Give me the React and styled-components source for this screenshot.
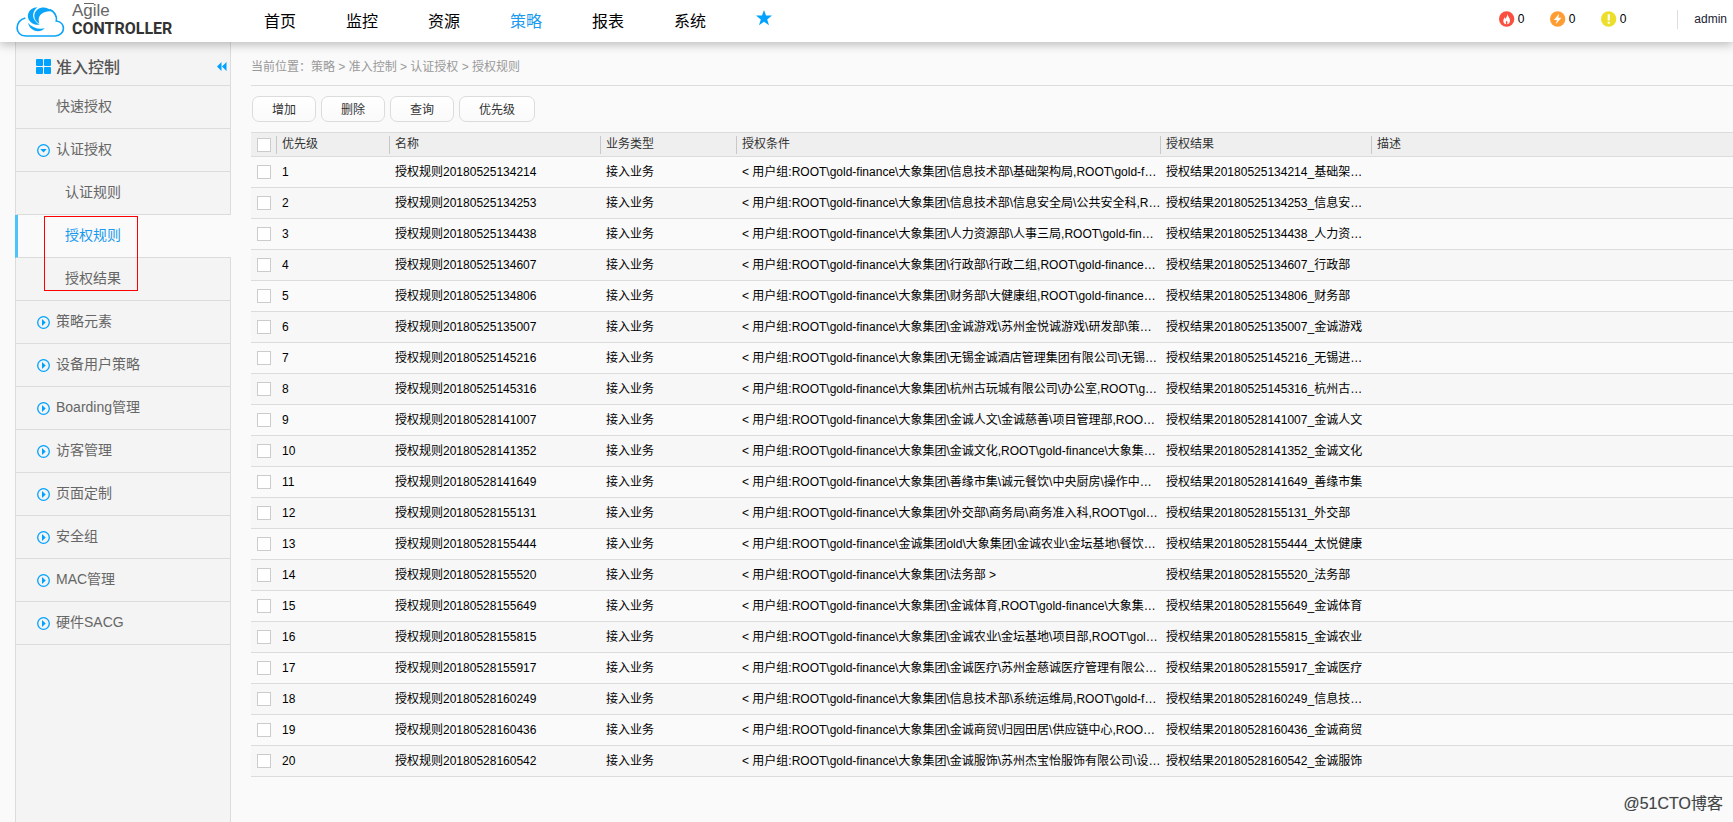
import React, { useState } from 'react';
import styled, { createGlobalStyle, css } from 'styled-components';

const GlobalStyle = createGlobalStyle`
  * {
    box-sizing: border-box;
  }
  body {
    margin: 0;
    background: #fafafa;
    color: #000;
    font-family: 'Liberation Sans', 'Noto Sans CJK SC', sans-serif;
    font-size: 12px;
  }
  a {
    color: inherit;
    text-decoration: none;
  }
  ul {
    list-style: none;
    margin: 0;
    padding: 0;
  }
  button,
  input {
    font-family: inherit;
    margin: 0;
  }
`;

const Page = styled.div`
  display: flex;
  flex-direction: column;
  min-height: 100vh;
  position: relative;
`;

const Header = styled.header`
  display: flex;
  align-items: center;
  height: 42px;
  padding: 0 6px 0 16px;
  background: #fff;
  box-shadow: 0 3px 9px rgba(0, 0, 0, 0.24);
  position: relative;
  z-index: 1;
`;

const Logo = styled.a`
  display: flex;
  width: 248px;
  gap: 7px;
  padding-bottom: 2px;
  & svg {
    margin-top: 4px;
  }
`;

const LogoText = styled.div`
  display: flex;
  flex-direction: column;
`;

const Agile = styled.span`
  align-self: flex-start;
  font-size: 17px;
  line-height: 18px;
  color: #666;
  position: relative;
  &::after {
    content: '';
    position: absolute;
    top: 1px;
    left: 12px;
    width: 10px;
    height: 1px;
    background: #666;
  }
`;

const Controller = styled.span`
  font-family: Roboto, 'Liberation Sans', sans-serif;
  font-size: 16px;
  line-height: 18px;
  font-weight: 700;
  color: #333;
`;

const Nav = styled.nav`
  display: flex;
  align-items: center;
  gap: 50px;
  flex: 1;
  padding-bottom: 2px;
  font-size: 16px;
`;

const NavLink = styled.a`
  color: ${(props) => (props.$active ? '#1b9aee' : '#000')};
`;

const Alarms = styled.div`
  display: flex;
  gap: 26px;
  padding: 0 51px 4px 0;
`;

const Alarm = styled.a`
  display: flex;
  align-items: center;
  gap: 3px;
  width: 25px;
`;

const User = styled.a`
  margin-bottom: 4px;
  padding: 2px 0 3px 16px;
  border-left: 1px solid #ddd;
  line-height: 14px;
  color: #223;
`;

const Body = styled.div`
  display: flex;
  flex: 1;
`;

const Sidebar = styled.aside`
  flex: none;
  width: 216px;
  margin-left: 15px;
  background: #f4f4f4;
  box-shadow: inset 1px 0 #dcdcdc, inset -1px 0 #dcdcdc;
`;

const SideTitle = styled.div`
  display: flex;
  align-items: center;
  gap: 5px;
  height: 44px;
  padding: 6px 4px 0 21px;
  border-bottom: 1px solid #dcdcdc;
  & h2 {
    flex: 1;
    margin: 0;
    padding-bottom: 2px;
    font-size: 16px;
    font-weight: 500;
    color: #555;
  }
`;

const Collapse = styled.button`
  display: flex;
  padding: 0;
  border: none;
  background: none;
  cursor: pointer;
`;

const MenuLink = styled.a`
  display: flex;
  align-items: center;
  gap: 6px;
  height: 43px;
  padding: 0 0 4px ${(props) => (props.$sub ? '50px' : '22px')};
  border-bottom: 1px solid #dcdcdc;
  font-size: 14px;
  color: #666;
  & svg {
    margin-top: 4px;
  }
  ${(props) =>
    props.$active &&
    css`
      padding-left: 47px;
      border-left: 3px solid #4cc4fa;
      background: #fafafa;
      color: #1b9aee;
    `}
`;

const IconSlot = styled.span`
  display: flex;
  width: 13px;
`;

const SubMenu = styled.ul`
  position: relative;
`;

const Marker = styled.div`
  position: absolute;
  top: 44px;
  left: 29px;
  width: 94px;
  height: 75px;
  border: 1px solid #f00;
  pointer-events: none;
`;

const Main = styled.main`
  flex: 1;
  min-width: 0;
  padding: 0 0 45px 20px;
`;

const Breadcrumb = styled.div`
  height: 44px;
  padding-top: 8px;
  border-bottom: 1px solid #dcdcdc;
  line-height: 34px;
  color: #999;
`;

const Toolbar = styled.div`
  display: flex;
  gap: 5px;
  padding: 10px 1px;
`;

const ToolButton = styled.button`
  height: 26px;
  padding: 0 19px 2px;
  border: 1px solid #dcdcdc;
  border-radius: 7px;
  background: linear-gradient(#fff, #fafafa);
  font-size: 12px;
  color: #333;
  cursor: pointer;
`;

const Table = styled.table`
  width: 100%;
  table-layout: fixed;
  border-collapse: separate;
  border-spacing: 0;
  border-top: 1px solid #dcdcdc;
  & th,
  & td {
    padding: 0 0 0 6px;
    border-bottom: 1px solid #dcdcdc;
    text-align: left;
    white-space: nowrap;
    overflow: hidden;
    line-height: 16px;
  }
  & th {
    height: 24px;
    background: #efefef;
    font-weight: 400;
    color: #333;
  }
  & td {
    height: 31px;
  }
  & tbody tr:nth-child(even) {
    background: #f7f7f7;
  }
`;

const HeadLabel = styled.div`
  height: 18px;
  margin-left: -6px;
  padding-left: 5px;
  border-left: 1px solid #c8c8c8;
`;

const CheckBox = styled.input`
  display: block;
  appearance: none;
  width: 14px;
  height: 14px;
  border: 1px solid #ccc;
  background: #fff;
  &:checked {
    background: #00a2ff;
  }
`;

const Watermark = styled.div`
  position: absolute;
  right: 10px;
  bottom: 6px;
  font-size: 16px;
  line-height: 24px;
  color: #444;
  text-shadow: 1px 1px #fff, 0 0 1px #999;
`;

const CloudLogo = () => (
  <svg width="49" height="32" viewBox="48 12 147 96" aria-hidden="true">
    <g fill="none" stroke="#0aa5f8" strokeWidth="5">
      <path d="M76 48C43 55 43 102 77 102H165C198 99 198 61 169 57C172 42 162 27 149 23" />
    </g>
    <g fill="#0aa5f8">
      <path d="M156 28C138 9 107 15 103 39C102 51 108 60 118 65C110 43 126 25 156 28Z" />
      <path d="M112 16C84 18 76 45 91 59C99 67 110 69 119 68C94 54 94 31 112 16Z" />
      <path d="M84 63C90 87 119 96 134 79C117 83 97 78 84 63Z" />
    </g>
  </svg>
);

const StarIcon = () => (
  <svg width="16" height="16" viewBox="0 0 16 16" aria-hidden="true">
    <path
      fill="#00a2ff"
      d="M8 0L10 5.600H16L11.200 9.400L13 15.200L8 11.800L3 15.200L4.800 9.400L0 5.600H6Z"
    />
  </svg>
);

const alarmShapes = {
  critical: (
    <path
      fill="#fff"
      d="M8.500 2.500C9 5 11.500 6.500 11.500 9.500C11.500 12 10 13.500 8.300 13.500C9.500 11.500 8.500 10.500 8 9.500C7.800 10.800 6.500 11.300 7.500 13.500C5.500 13.200 4.300 11.500 4.500 9.500C4.700 8 5.500 7.300 5.700 6.200C6.500 7 6.500 7.500 6.600 8C8 6.500 8.700 4.500 8.500 2.500Z"
    />
  ),
  major: <path fill="#fff" d="M9.500 2.500L4 9H7.300L6 13.500L12 6.700H8.700Z" />,
  warning: <path fill="#fff" d="M7 3H9.200V9.500H7ZM7 11H9.200V13H7Z" />,
};

const AlarmIcon = ({ type, color }) => (
  <svg width="16" height="16" viewBox="0 0 16 16" aria-hidden="true">
    <circle cx="8" cy="8" r="8" fill={color} />
    {alarmShapes[type]}
  </svg>
);

const GridIcon = () => (
  <svg width="15" height="15" viewBox="0 0 15 15" fill="#00a2ff" aria-hidden="true">
    <rect width="7" height="7" rx="1" />
    <rect x="8" width="7" height="7" rx="1" />
    <rect y="8" width="7" height="7" rx="1" />
    <rect x="8" y="8" width="7" height="7" rx="1" />
  </svg>
);

const CollapseIcon = () => (
  <svg width="10" height="9" viewBox="0 0 10 9" fill="#00a2ff" aria-hidden="true">
    <path d="M4.500 0V9L0 4.500ZM9.500 0V9L5 4.500Z" />
  </svg>
);

const ArrowIcon = ({ open }) => (
  <svg width="13" height="13" viewBox="0 0 13 13" aria-hidden="true">
    <circle cx="6.500" cy="6.500" r="5.800" fill="none" stroke="#00a2ff" strokeWidth="1.300" />
    <path fill="#00a2ff" d={open ? 'M3.300 5H9.700L6.500 8.500Z' : 'M5 3V10L8.700 6.500Z'} />
  </svg>
);

const navItems = ['首页', '监控', '资源', '策略', '报表', '系统'];

const alarms = [
  { type: 'critical', color: '#fb4f3f', count: 0 },
  { type: 'major', color: '#ff9c32', count: 0 },
  { type: 'warning', color: '#ecdf2b', count: 0 },
];

const menu = [
  { name: '快速授权', leaf: true },
  { name: '认证授权', children: ['认证规则', '授权规则', '授权结果'] },
  { name: '策略元素' },
  { name: '设备用户策略' },
  { name: 'Boarding管理' },
  { name: '访客管理' },
  { name: '页面定制' },
  { name: '安全组' },
  { name: 'MAC管理' },
  { name: '硬件SACG' },
];

const buttons = ['增加', '删除', '查询', '优先级'];

const columns = [
  { name: '优先级', width: 113 },
  { name: '名称', width: 211 },
  { name: '业务类型', width: 136 },
  { name: '授权条件', width: 424 },
  { name: '授权结果', width: 211 },
  { name: '描述' },
];

// [id, user group under ROOT\gold-finance, result]
const rules = [
  ['20180525134214', '大象集团\\信息技术部\\基础架构局,ROOT\\gold-f…', '基础架…'],
  ['20180525134253', '大象集团\\信息技术部\\信息安全局\\公共安全科,R…', '信息安…'],
  ['20180525134438', '大象集团\\人力资源部\\人事三局,ROOT\\gold-fin…', '人力资…'],
  ['20180525134607', '大象集团\\行政部\\行政二组,ROOT\\gold-finance…', '行政部'],
  ['20180525134806', '大象集团\\财务部\\大健康组,ROOT\\gold-finance…', '财务部'],
  ['20180525135007', '大象集团\\金诚游戏\\苏州金悦诚游戏\\研发部\\策…', '金诚游戏'],
  ['20180525145216', '大象集团\\无锡金诚酒店管理集团有限公司\\无锡…', '无锡进…'],
  ['20180525145316', '大象集团\\杭州古玩城有限公司\\办公室,ROOT\\g…', '杭州古…'],
  ['20180528141007', '大象集团\\金诚人文\\金诚慈善\\项目管理部,ROO…', '金诚人文'],
  ['20180528141352', '大象集团\\金诚文化,ROOT\\gold-finance\\大象集…', '金诚文化'],
  ['20180528141649', '大象集团\\善缘市集\\诚元餐饮\\中央厨房\\操作中…', '善缘市集'],
  ['20180528155131', '大象集团\\外交部\\商务局\\商务准入科,ROOT\\gol…', '外交部'],
  ['20180528155444', '金诚集团old\\大象集团\\金诚农业\\金坛基地\\餐饮…', '太悦健康'],
  ['20180528155520', '大象集团\\法务部 >', '法务部'],
  ['20180528155649', '大象集团\\金诚体育,ROOT\\gold-finance\\大象集…', '金诚体育'],
  ['20180528155815', '大象集团\\金诚农业\\金坛基地\\项目部,ROOT\\gol…', '金诚农业'],
  ['20180528155917', '大象集团\\金诚医疗\\苏州金慈诚医疗管理有限公…', '金诚医疗'],
  ['20180528160249', '大象集团\\信息技术部\\系统运维局,ROOT\\gold-f…', '信息技…'],
  ['20180528160436', '大象集团\\金诚商贸\\归园田居\\供应链中心,ROO…', '金诚商贸'],
  ['20180528160542', '大象集团\\金诚服饰\\苏州杰宝怡服饰有限公司\\设…', '金诚服饰'],
];

const App = () => {
  const [current, setCurrent] = useState('授权规则');
  const [selected, setSelected] = useState([]);

  const toggleHandler = (id) => {
    setSelected((prev) =>
      prev.includes(id) ? prev.filter((item) => item !== id) : [...prev, id]
    );
  };

  const toggleAllHandler = (e) => {
    setSelected(e.target.checked ? rules.map(([id]) => id) : []);
  };

  return (
    <Page>
      <GlobalStyle />
      <Header>
        <Logo href="#home">
          <CloudLogo />
          <LogoText>
            <Agile>Agile</Agile>
            <Controller>CONTROLLER</Controller>
          </LogoText>
        </Logo>
        <Nav>
          {navItems.map((name) => (
            <NavLink key={name} href={`#${name}`} $active={name === '策略'}>
              {name}
            </NavLink>
          ))}
          <a href="#favorites" aria-label="收藏">
            <StarIcon />
          </a>
        </Nav>
        <Alarms>
          {alarms.map((alarm) => (
            <Alarm key={alarm.type} href={`#${alarm.type}`}>
              <AlarmIcon type={alarm.type} color={alarm.color} />
              {alarm.count}
            </Alarm>
          ))}
        </Alarms>
        <User href="#admin">admin</User>
      </Header>

      <Body>
        <Sidebar>
          <SideTitle>
            <GridIcon />
            <h2>准入控制</h2>
            <Collapse aria-label="收起">
              <CollapseIcon />
            </Collapse>
          </SideTitle>
          <ul>
            {menu.map((item) => (
              <li key={item.name}>
                <MenuLink href={`#${item.name}`}>
                  <IconSlot>
                    {!item.leaf && <ArrowIcon open={!!item.children} />}
                  </IconSlot>
                  {item.name}
                </MenuLink>
                {item.children && (
                  <SubMenu>
                    {item.children.map((name) => (
                      <li key={name}>
                        <MenuLink
                          href={`#${name}`}
                          $sub
                          $active={name === current}
                          onClick={() => setCurrent(name)}
                        >
                          {name}
                        </MenuLink>
                      </li>
                    ))}
                    <Marker />
                  </SubMenu>
                )}
              </li>
            ))}
          </ul>
        </Sidebar>

        <Main>
          <Breadcrumb>
            当前位置：策略 &gt; 准入控制 &gt; 认证授权 &gt; 授权规则
          </Breadcrumb>
          <Toolbar>
            {buttons.map((name) => (
              <ToolButton key={name}>{name}</ToolButton>
            ))}
          </Toolbar>
          <Table>
            <colgroup>
              <col width={25} />
              {columns.map((col) => (
                <col key={col.name} width={col.width} />
              ))}
            </colgroup>
            <thead>
              <tr>
                <th>
                  <CheckBox
                    type="checkbox"
                    aria-label="全选"
                    checked={selected.length === rules.length}
                    onChange={toggleAllHandler}
                  />
                </th>
                {columns.map((col) => (
                  <th key={col.name}>
                    <HeadLabel>{col.name}</HeadLabel>
                  </th>
                ))}
              </tr>
            </thead>
            <tbody>
              {rules.map(([id, group, result], i) => (
                <tr key={id}>
                  <td>
                    <CheckBox
                      type="checkbox"
                      aria-label={`授权规则${id}`}
                      checked={selected.includes(id)}
                      onChange={() => toggleHandler(id)}
                    />
                  </td>
                  <td>{i + 1}</td>
                  <td>授权规则{id}</td>
                  <td>接入业务</td>
                  <td>{`< 用户组:ROOT\\gold-finance\\${group}`}</td>
                  <td>
                    授权结果{id}_{result}
                  </td>
                  <td />
                </tr>
              ))}
            </tbody>
          </Table>
        </Main>
      </Body>
      <Watermark>@51CTO博客</Watermark>
    </Page>
  );
};

export default App;
